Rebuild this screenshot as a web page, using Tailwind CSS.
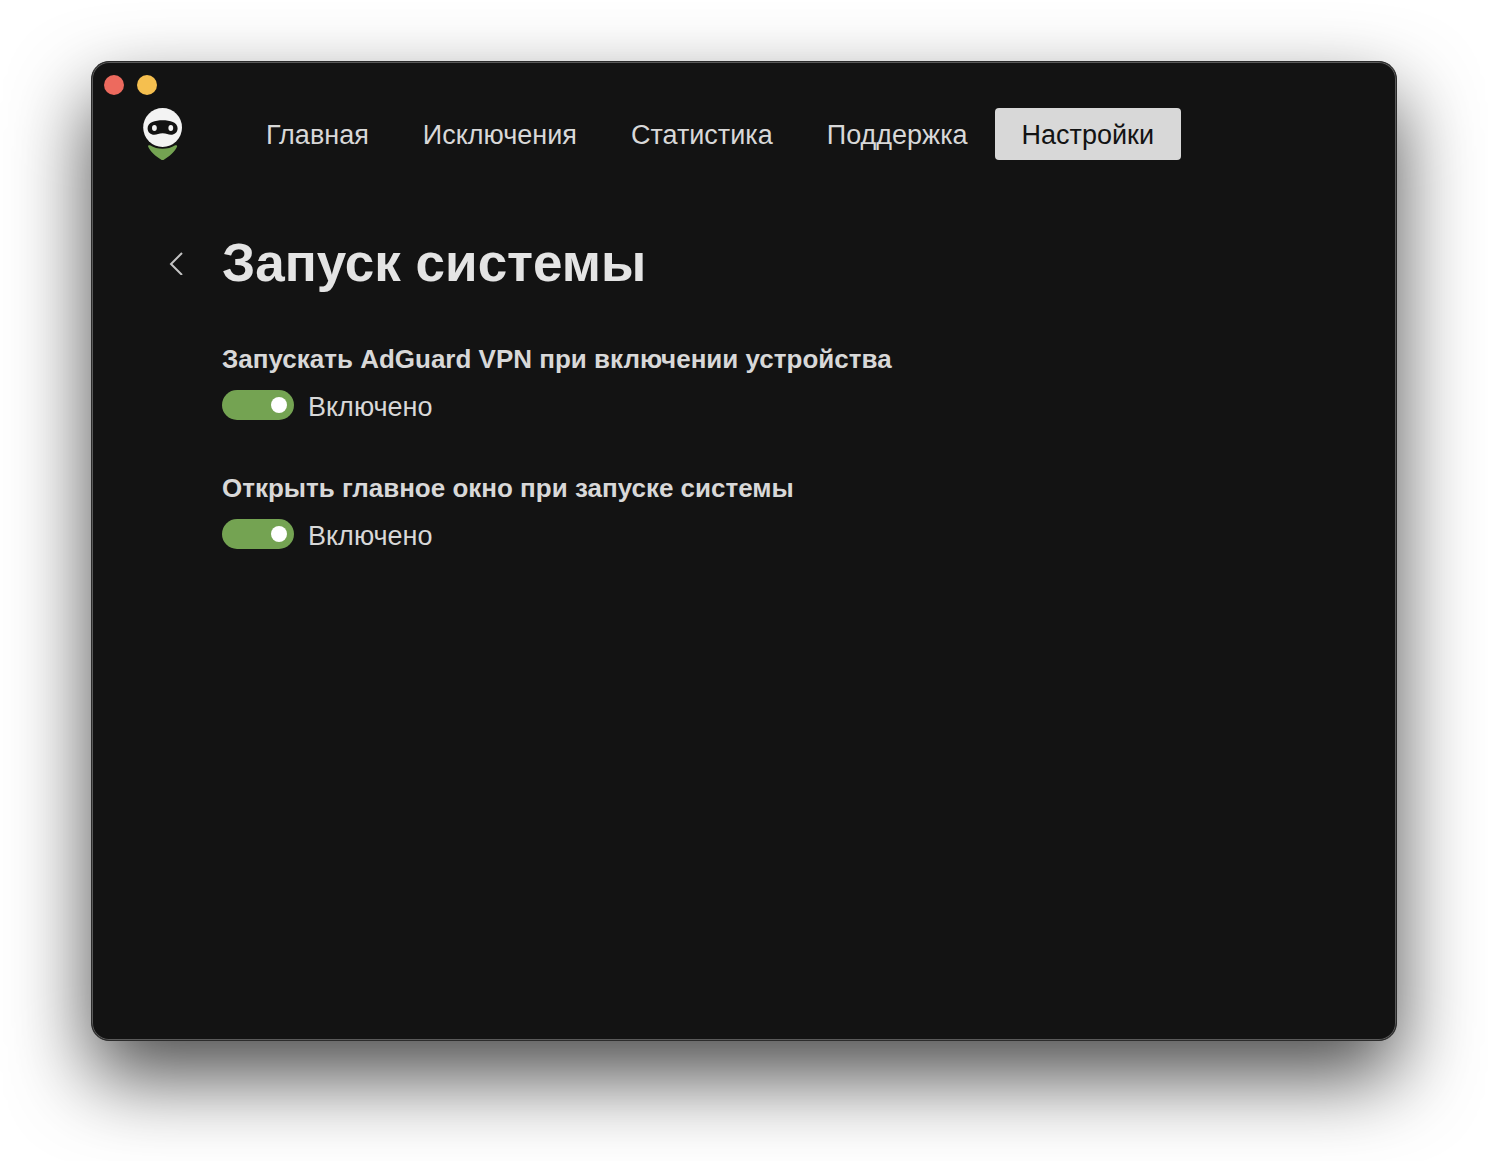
<!DOCTYPE html>
<html lang="ru">
<head>
  <meta charset="UTF-8" />
  <title>AdGuard VPN — Запуск системы</title>
  <meta name="viewport" content="width=device-width, initial-scale=1.0" />
  <script src="https://cdn.jsdelivr.net/npm/@tailwindcss/browser@4"></script>
</head>
<body class="min-h-screen flex flex-col bg-white px-[91px] pt-[61px] pb-[120px] overflow-x-hidden font-['Liberation_Sans',Arial,sans-serif] text-[27px] leading-8 text-[#d8d8d8]">
  <div class="flex-1 flex flex-col bg-[#131313] rounded-[18px] border border-[#2c2c2c] inset-ring inset-ring-[#5a5a5a] shadow-[0_36px_80px_rgba(0,0,0,0.7)]">

    <!-- window buttons -->
    <div class="flex gap-[13px] px-3 pt-[13px]">
      <button type="button" aria-label="Закрыть" class="size-5 rounded-full bg-[#ed6a5e]"></button>
      <button type="button" aria-label="Свернуть" class="size-5 rounded-full bg-[#f5bf4f]"></button>
    </div>

    <header class="flex items-start gap-14 pl-[51px] pt-[13px]">
      <a href="#" aria-label="AdGuard VPN" class="shrink-0">
        <svg class="w-10 h-[52px]" viewBox="0 0 40 52">
          <circle cx="19.600" cy="19.500" r="19.400" fill="#f3f3f3" />
          <path d="M19.600 12.200C27 12.200 34.600 14 34.600 20.200C34.600 24.500 31.500 26.700 28 26.700C25 26.700 23.500 25.300 19.600 25.300C15.700 25.300 14.200 26.700 11.200 26.700C7.700 26.700 4.600 24.500 4.600 20.200C4.600 14 12.200 12.200 19.600 12.200Z" fill="#131313" />
          <ellipse cx="11.400" cy="20" rx="2.400" ry="2.900" fill="#f3f3f3" />
          <ellipse cx="27.800" cy="20" rx="2.400" ry="2.900" fill="#f3f3f3" />
          <path d="M7 37.300C14.500 42 24.700 42 32.200 37.300C33.500 36.800 34.500 37.600 34 38.800C32 43.500 26 49 19.600 52.500C13.200 49 7.200 43.500 5.200 38.800C4.700 37.600 5.700 36.800 7 37.300Z" fill="#74a352" />
        </svg>
      </a>
      <nav class="flex flex-wrap">
        <a href="#" class="px-[27px] pt-[11px] pb-[9px] rounded">Главная</a>
        <a href="#" class="px-[27px] pt-[11px] pb-[9px] rounded">Исключения</a>
        <a href="#" class="px-[27px] pt-[11px] pb-[9px] rounded">Статистика</a>
        <a href="#" class="px-[27px] pt-[11px] pb-[9px] rounded">Поддержка</a>
        <a href="#" aria-current="page" class="px-[27px] pt-[11px] pb-[9px] rounded bg-[#d8d8d8] text-[#131313]">Настройки</a>
      </nav>
    </header>

    <main class="flex-1 pt-[71px] px-[70px]">
      <div class="flex items-center gap-8">
        <button type="button" aria-label="Назад" class="w-7 h-10 flex items-center justify-center">
          <svg class="w-4 h-6" viewBox="0 0 16 24" fill="none" stroke="#c4c4c4" stroke-width="2">
            <path d="M14 2L3 13L14 24" />
          </svg>
        </button>
        <h1 class="text-[53px] leading-16 font-bold text-[#e4e4e4]">Запуск системы</h1>
      </div>

      <div class="pl-[60px]">
        <section class="mt-12">
          <h2 id="launch" class="text-[26px] font-bold">Запускать AdGuard VPN при включении устройства</h2>
          <label class="mt-3 flex items-center gap-[14px]">
            <input type="checkbox" role="switch" checked aria-describedby="launch" class="appearance-none relative w-[72px] h-[30px] rounded-full bg-[#555555] checked:bg-[#74a352] before:absolute before:top-[7px] before:left-[7px] before:size-4 before:rounded-full before:bg-white checked:before:left-[49px]" />
            <span class="pt-1">Включено</span>
          </label>
        </section>

        <section class="mt-[49px]">
          <h2 id="window" class="text-[26px] font-bold">Открыть главное окно при запуске системы</h2>
          <label class="mt-3 flex items-center gap-[14px]">
            <input type="checkbox" role="switch" checked aria-describedby="window" class="appearance-none relative w-[72px] h-[30px] rounded-full bg-[#555555] checked:bg-[#74a352] before:absolute before:top-[7px] before:left-[7px] before:size-4 before:rounded-full before:bg-white checked:before:left-[49px]" />
            <span class="pt-1">Включено</span>
          </label>
        </section>
      </div>
    </main>
  </div>
</body>
</html>
